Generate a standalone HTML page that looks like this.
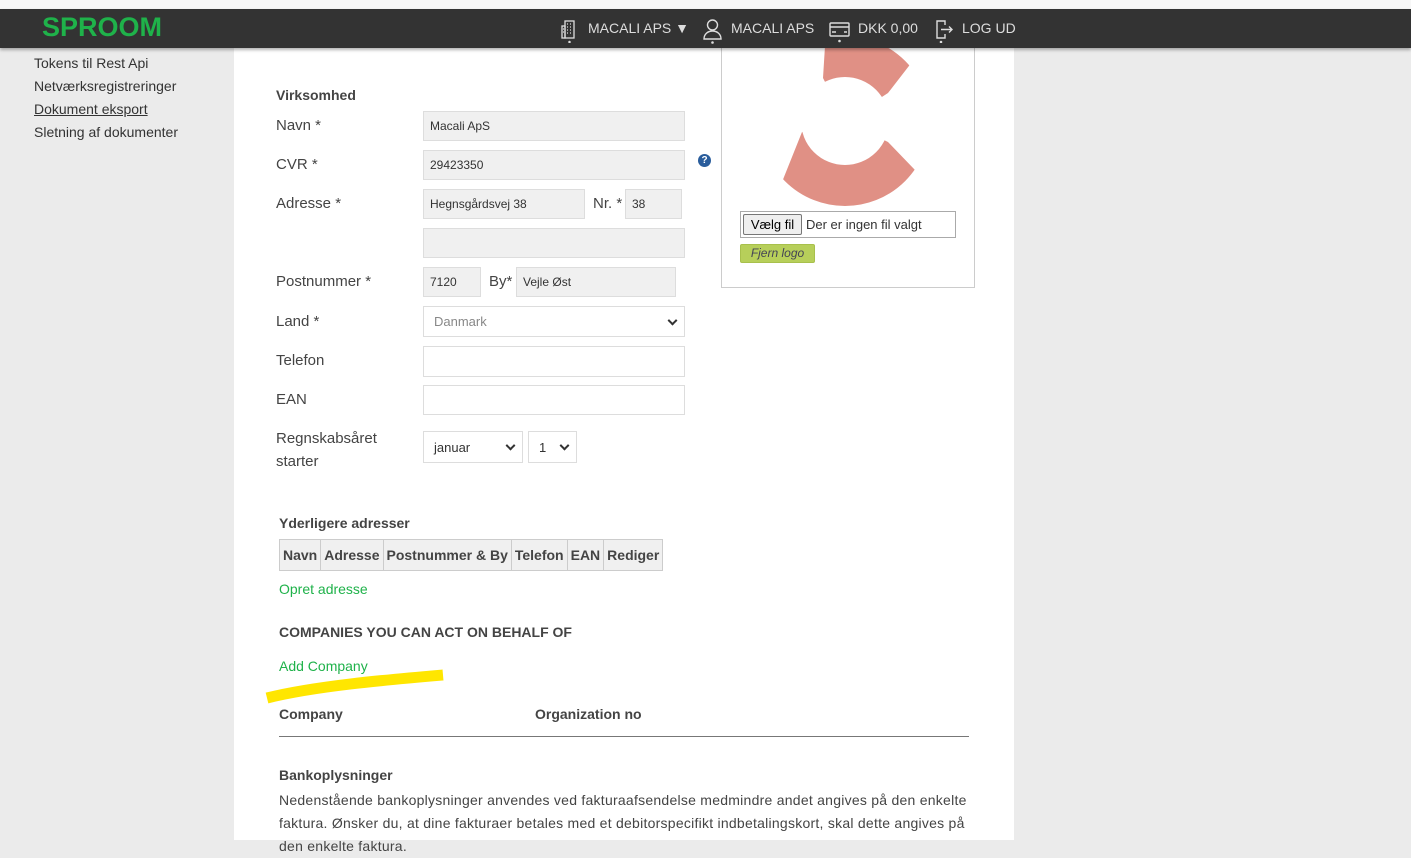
<!DOCTYPE html>
<html><head><meta charset="utf-8"><style>
*{box-sizing:border-box;margin:0;padding:0}
body{width:1411px;height:840px;overflow:hidden;background:#ebebeb;font-family:"Liberation Sans",sans-serif;color:#444;position:relative}
.a{position:absolute;white-space:nowrap}
.top{left:0;top:0;width:1411px;height:9px;background:#f7f7f7}
.hdr{left:0;top:9px;width:1411px;height:39px;background:#333;box-shadow:0 2px 3px rgba(0,0,0,.3);z-index:2}
.panel{left:234px;top:48px;width:780px;height:792px;background:#fff}
.lbl{font-size:15px;color:#444}
.in{position:absolute;background:#f0f0f0;border:1px solid #ddd;font-size:12px;color:#333;padding-left:6px;display:flex;align-items:center}
.in.w{background:#fff}
.sel{position:absolute;background:#fff;border:1px solid #ddd;font-size:13px;color:#333;padding-left:10px;display:flex;align-items:center}
.sel:after{content:"";position:absolute;right:8px;top:50%;width:5px;height:5px;border-right:2px solid #333;border-bottom:2px solid #333;transform:translateY(-70%) rotate(45deg)}
.nav{color:#ddd;font-size:14px;top:20px}
th{border:1px solid #ccc;background:#f0f0f0;font-size:14px;font-weight:bold;padding:0 3px;height:31px;color:#444}
table{border-collapse:collapse}
</style></head><body>
<div class="a top"></div>
<div class="a hdr">
<div class="a" style="left:42px;top:3px;font-size:27px;font-weight:bold;color:#1fb24a">SPROOM</div>
<svg class="a" style="left:561px;top:10px" width="17" height="24" viewBox="0 0 17 24" fill="none" stroke="#ddd" stroke-width="1.3"><rect x="4" y="2" width="9" height="17"/><rect x="1" y="7" width="3" height="12"/><path d="M6 5h1M9 5h1M6 8h1M9 8h1M6 11h1M9 11h1M6 14h1M9 14h1M2 10h1M2 13h1"/><circle cx="8.5" cy="23" r=".6" fill="#ddd"/></svg>
<div class="a nav" style="left:588px;top:11px">MACALI APS ▼</div>
<svg class="a" style="left:703px;top:9px" width="19" height="26" viewBox="0 0 19 26" fill="none" stroke="#ddd" stroke-width="1.4"><circle cx="9.5" cy="7" r="5"/><path d="M1 21c0-5 4-8 8.5-8s8.5 3 8.5 8z"/><circle cx="9.5" cy="24.5" r=".6" fill="#ddd"/></svg>
<div class="a nav" style="left:731px;top:11px">MACALI APS</div>
<svg class="a" style="left:829px;top:12px" width="21" height="22" viewBox="0 0 21 22" fill="none" stroke="#ddd" stroke-width="1.4"><rect x="1" y="2" width="19" height="13" rx="1"/><path d="M1 6h19M3 11h4M15 11h3"/><circle cx="10.5" cy="20" r=".6" fill="#ddd"/></svg>
<div class="a nav" style="left:858px;top:11px">DKK 0,00</div>
<svg class="a" style="left:935px;top:10px" width="18" height="24" viewBox="0 0 18 24" fill="none" stroke="#ddd" stroke-width="1.4"><path d="M10 6V2H2v17h8v-4M6 10.5h11M14 7.5l3 3-3 3"/><circle cx="6" cy="23" r=".6" fill="#ddd"/></svg>
<div class="a nav" style="left:962px;top:11px">LOG UD</div>
</div>
<div class="a" style="left:34px;top:52px;font-size:14px;line-height:23px;color:#333">Tokens til Rest Api<br>Netværksregistreringer<br><u>Dokument eksport</u><br>Sletning af dokumenter</div>
<div class="a panel"></div>
<div class="a" style="left:276px;top:87px;font-size:14px;font-weight:bold">Virksomhed</div>
<div class="a lbl" style="left:276px;top:117px">Navn *</div>
<div class="a lbl" style="left:276px;top:156px">CVR *</div>
<div class="a lbl" style="left:276px;top:195px">Adresse *</div>
<div class="a lbl" style="left:593px;top:195px">Nr. *</div>
<div class="a lbl" style="left:276px;top:273px">Postnummer *</div>
<div class="a lbl" style="left:489px;top:273px">By*</div>
<div class="a lbl" style="left:276px;top:313px">Land *</div>
<div class="a lbl" style="left:276px;top:352px">Telefon</div>
<div class="a lbl" style="left:276px;top:391px">EAN</div>
<div class="a lbl" style="left:276px;top:427px;line-height:23px">Regnskabsåret<br>starter</div>
<div class="in" style="left:423px;top:111px;width:262px;height:30px">Macali ApS</div>
<div class="in" style="left:423px;top:150px;width:262px;height:30px">29423350</div>
<div class="a" style="left:698px;top:154px;width:13px;height:13px;border-radius:50%;background:#2a5d9c;color:#fff;font-size:10px;font-weight:bold;text-align:center;line-height:13px">?</div>
<div class="in" style="left:423px;top:189px;width:162px;height:30px">Hegnsgårdsvej 38</div>
<div class="in" style="left:625px;top:189px;width:57px;height:30px">38</div>
<div class="in" style="left:423px;top:228px;width:262px;height:30px"></div>
<div class="in" style="left:423px;top:267px;width:58px;height:30px">7120</div>
<div class="in" style="left:516px;top:267px;width:160px;height:30px">Vejle Øst</div>
<div class="sel" style="left:423px;top:306px;width:262px;height:31px;color:#888">Danmark</div>
<div class="in w" style="left:423px;top:346px;width:262px;height:31px"></div>
<div class="in w" style="left:423px;top:385px;width:262px;height:30px"></div>
<div class="sel" style="left:423px;top:431px;width:100px;height:32px">januar</div>
<div class="sel" style="left:528px;top:431px;width:49px;height:32px">1</div>
<div class="a" style="left:721px;top:40px;width:254px;height:248px;border:1px solid #ccc;background:#fff"></div>
<svg class="a" style="left:721px;top:40px" width="254" height="180" viewBox="721 40 254 180">
<defs>
<clipPath id="c1"><polygon points="823,78 826,30 940,30 912,62 888,93 845,121"/></clipPath>
<clipPath id="c2"><polygon points="888,142 940,196 940,230 750,230 770,212 802,132 845,121"/></clipPath>
</defs>
<circle cx="845" cy="121" r="64.5" fill="none" stroke="#e09085" stroke-width="41" clip-path="url(#c1)"/>
<circle cx="845" cy="121" r="64.5" fill="none" stroke="#e09085" stroke-width="41" clip-path="url(#c2)"/>
</svg>
<div class="a" style="left:740px;top:211px;width:216px;height:27px;border:1px solid #aaa;background:#fff"></div>
<div class="a" style="left:743px;top:214px;width:59px;height:21px;border:1px solid #777;border-radius:2px;background:#efefef;font-size:13px;color:#000;text-align:center;line-height:19px">Vælg fil</div>
<div class="a" style="left:806px;top:217px;font-size:13px;color:#333">Der er ingen fil valgt</div>
<div class="a" style="left:740px;top:244px;width:75px;height:19px;background:#b7cf5a;border:1px solid #a8c04c;border-radius:2px;font-size:12px;font-style:italic;color:#445;text-align:center;line-height:17px">Fjern logo</div>
<div class="a" style="left:279px;top:515px;font-size:14px;font-weight:bold">Yderligere adresser</div>
<table class="a" style="left:279px;top:539px"><tr><th>Navn</th><th>Adresse</th><th>Postnummer &amp; By</th><th>Telefon</th><th>EAN</th><th>Rediger</th></tr></table>
<div class="a" style="left:279px;top:581px;font-size:14px;color:#1fb24a">Opret adresse</div>
<div class="a" style="left:279px;top:624px;font-size:14px;font-weight:bold">COMPANIES YOU CAN ACT ON BEHALF OF</div>
<div class="a" style="left:279px;top:658px;font-size:14px;color:#1fb24a">Add Company</div>
<svg class="a" style="left:265px;top:668px" width="182" height="36"><path d="M2 30C50 18 120 12 178 7" stroke="#ffe600" stroke-width="11" fill="none"/></svg>
<div class="a" style="left:279px;top:706px;font-size:14px;font-weight:bold">Company</div>
<div class="a" style="left:535px;top:706px;font-size:14px;font-weight:bold">Organization no</div>
<div class="a" style="left:279px;top:736px;width:690px;height:1px;background:#777"></div>
<div class="a" style="left:279px;top:767px;font-size:14px;font-weight:bold">Bankoplysninger</div>
<div class="a" style="left:279px;top:789px;font-size:14px;line-height:23px;white-space:normal;width:695px;letter-spacing:.25px">Nedenstående bankoplysninger anvendes ved fakturaafsendelse medmindre andet angives på den enkelte faktura. Ønsker du, at dine fakturaer betales med et debitorspecifikt indbetalingskort, skal dette angives på den enkelte faktura.</div>
</body></html>
